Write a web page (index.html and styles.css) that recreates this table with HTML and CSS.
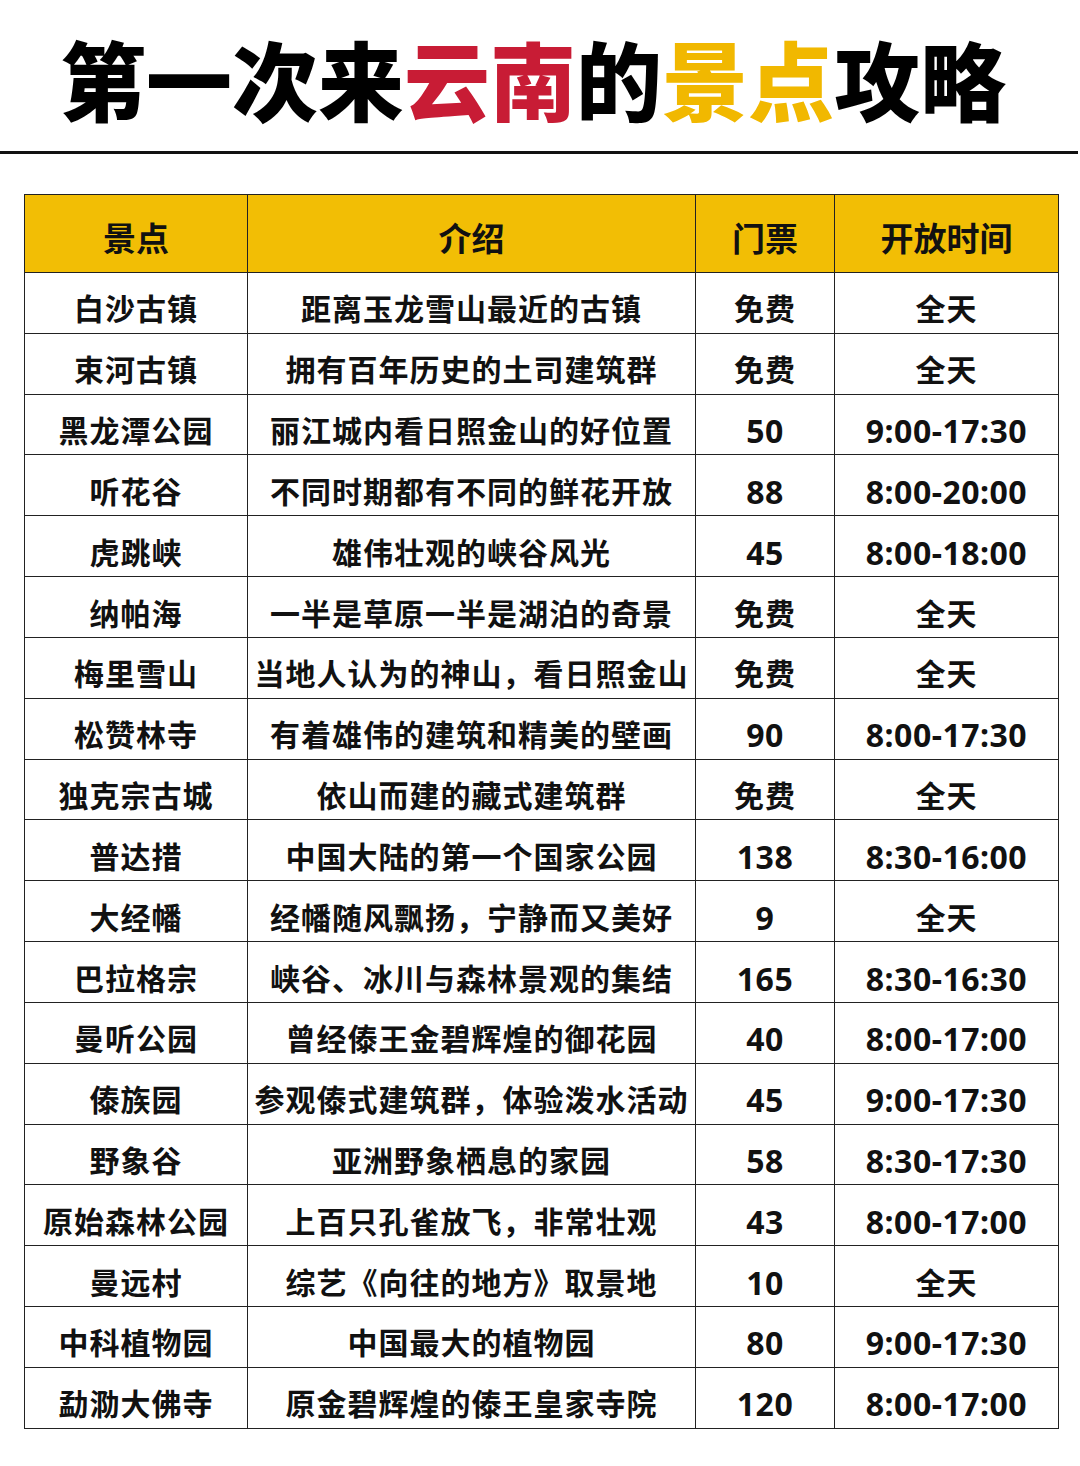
FILE: index.html
```html
<!DOCTYPE html>
<html lang="zh-CN">
<head>
<meta charset="utf-8">
<title>第一次来云南的景点攻略</title>
<link rel="stylesheet" href="styles.css">
</head>
<body>
<header class="title-bar">
  <h1 class="title">第一次来<span class="red">云南</span>的<span class="yellow">景点</span>攻略</h1>
</header>
<div class="rule"></div>
<main class="wrap">
<table class="guide">
  <colgroup>
    <col class="c-name"><col class="c-desc"><col class="c-ticket"><col class="c-time">
  </colgroup>
  <thead>
    <tr><th>景点</th><th>介绍</th><th>门票</th><th>开放时间</th></tr>
  </thead>
  <tbody>
    <tr><td>白沙古镇</td><td>距离玉龙雪山最近的古镇</td><td>免费</td><td>全天</td></tr>
    <tr><td>束河古镇</td><td>拥有百年历史的土司建筑群</td><td>免费</td><td>全天</td></tr>
    <tr><td>黑龙潭公园</td><td>丽江城内看日照金山的好位置</td><td class="num">50</td><td class="num">9:00-17:30</td></tr>
    <tr><td>听花谷</td><td>不同时期都有不同的鲜花开放</td><td class="num">88</td><td class="num">8:00-20:00</td></tr>
    <tr><td>虎跳峡</td><td>雄伟壮观的峡谷风光</td><td class="num">45</td><td class="num">8:00-18:00</td></tr>
    <tr><td>纳帕海</td><td>一半是草原一半是湖泊的奇景</td><td>免费</td><td>全天</td></tr>
    <tr><td>梅里雪山</td><td>当地人认为的神山，看日照金山</td><td>免费</td><td>全天</td></tr>
    <tr><td>松赞林寺</td><td>有着雄伟的建筑和精美的壁画</td><td class="num">90</td><td class="num">8:00-17:30</td></tr>
    <tr><td>独克宗古城</td><td>依山而建的藏式建筑群</td><td>免费</td><td>全天</td></tr>
    <tr><td>普达措</td><td>中国大陆的第一个国家公园</td><td class="num">138</td><td class="num">8:30-16:00</td></tr>
    <tr><td>大经幡</td><td>经幡随风飘扬，宁静而又美好</td><td class="num">9</td><td>全天</td></tr>
    <tr><td>巴拉格宗</td><td>峡谷、冰川与森林景观的集结</td><td class="num">165</td><td class="num">8:30-16:30</td></tr>
    <tr><td>曼听公园</td><td>曾经傣王金碧辉煌的御花园</td><td class="num">40</td><td class="num">8:00-17:00</td></tr>
    <tr><td>傣族园</td><td>参观傣式建筑群，体验泼水活动</td><td class="num">45</td><td class="num">9:00-17:30</td></tr>
    <tr><td>野象谷</td><td>亚洲野象栖息的家园</td><td class="num">58</td><td class="num">8:30-17:30</td></tr>
    <tr><td>原始森林公园</td><td>上百只孔雀放飞，非常壮观</td><td class="num">43</td><td class="num">8:00-17:00</td></tr>
    <tr><td>曼远村</td><td>综艺《向往的地方》取景地</td><td class="num">10</td><td>全天</td></tr>
    <tr><td>中科植物园</td><td>中国最大的植物园</td><td class="num">80</td><td class="num">9:00-17:30</td></tr>
    <tr><td>勐泐大佛寺</td><td>原金碧辉煌的傣王皇家寺院</td><td class="num">120</td><td class="num">8:00-17:00</td></tr>
  </tbody>
</table>
</main>
</body>
</html>
```
FILE: styles.css
```css
html, body {
  margin: 0;
  padding: 0;
  background: #ffffff;
}
body {
  width: 1080px;
  font-family: "Noto Sans", "Noto Sans CJK SC", sans-serif;
  color: #111111;
}
.title-bar {
  height: 151px;
  display: flex;
  align-items: center;
  padding-left: 60px;
  box-sizing: border-box;
}
.title {
  margin: 0;
  font-family: "Noto Sans CJK SC", sans-serif;
  font-weight: 900;
  font-size: 86px;
  line-height: 86px;
  color: #000000;
  padding-top: 5px;
}
.red { color: #c81c35; }
.yellow { color: #f1b800; }
.rule {
  height: 3px;
  background: #111111;
  width: 1078px;
}
.wrap {
  padding: 40px 0 0 24px;
}
.guide {
  border-collapse: collapse;
  table-layout: fixed;
  width: 1034px;
  border: 1px solid #333333;
}
.c-name { width: 223px; }
.c-desc { width: 448px; }
.c-ticket { width: 139px; }
.c-time { width: 224px; }
.guide th, .guide td {
  border: 1px solid #222222;
  text-align: center;
  white-space: nowrap;
  overflow: hidden;
  padding: 0;
}
.guide th {
  background: #f2be05;
  height: 67px;
  padding-top: 10px;
  font-size: 33px;
  line-height: 40px;
  font-weight: 700;
}
.guide td {
  height: 46.84px;
  padding-top: 13px;
  font-size: 30px;
  line-height: 40px;
  font-weight: 700;
  letter-spacing: 1px;
}
.guide td.num {
  height: 46.84px;
  padding-top: 13px;
  font-size: 32px;
  letter-spacing: 0.5px;
}
```
